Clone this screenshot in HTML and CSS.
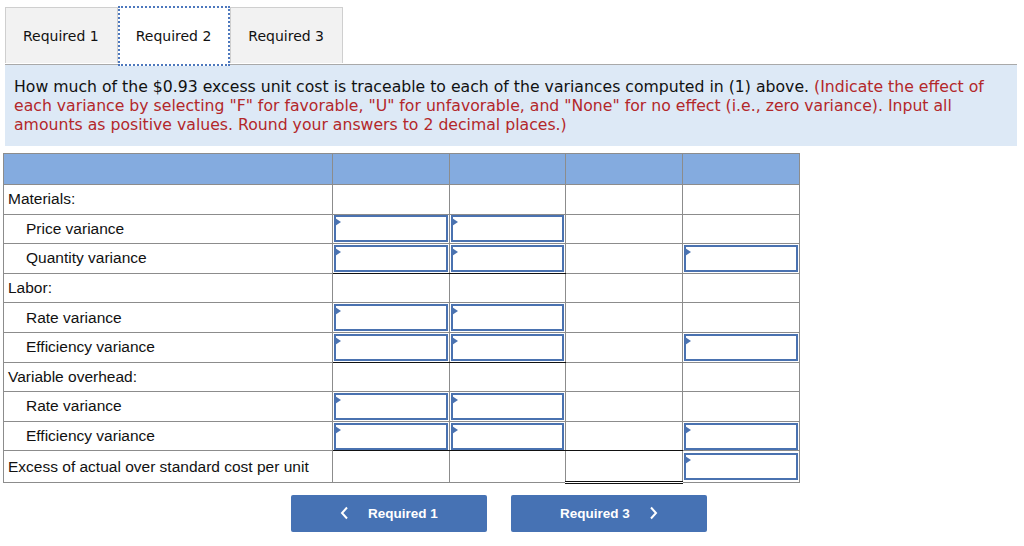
FILE: index.html
```html
<!DOCTYPE html>
<html>
<head>
<meta charset="utf-8">
<link rel="stylesheet" href="styles.css">
</head>
<body>
<div class="tabs">
  <div class="tab">Required 1</div>
  <div class="tab active">Required 2</div>
  <div class="tab">Required 3</div>
</div>
<div class="instructions">
  <p>How much of the $0.93 excess unit cost is traceable to each of the variances computed in (1) above. <span class="red">(Indicate the effect of each variance by selecting "F" for favorable, "U" for unfavorable, and "None" for no effect (i.e., zero variance). Input all amounts as positive values. Round your answers to 2 decimal places.)</span></p>
</div>
<table class="grid">
  <tr class="head"><th class="label"></th><th></th><th></th><th></th><th></th></tr>
  <tr><td class="label">Materials:</td><td></td><td></td><td></td><td></td></tr>
  <tr><td class="label sub">Price variance</td><td><div class="inp"></div></td><td><div class="inp"></div></td><td></td><td></td></tr>
  <tr><td class="label sub">Quantity variance</td><td class="tot"><div class="inp"></div></td><td class="tot"><div class="inp"></div></td><td></td><td><div class="inp"></div></td></tr>
  <tr><td class="label">Labor:</td><td></td><td></td><td></td><td></td></tr>
  <tr><td class="label sub">Rate variance</td><td><div class="inp"></div></td><td><div class="inp"></div></td><td></td><td></td></tr>
  <tr><td class="label sub">Efficiency variance</td><td class="tot"><div class="inp"></div></td><td class="tot"><div class="inp"></div></td><td></td><td><div class="inp"></div></td></tr>
  <tr><td class="label">Variable overhead:</td><td></td><td></td><td></td><td></td></tr>
  <tr><td class="label sub">Rate variance</td><td><div class="inp"></div></td><td><div class="inp"></div></td><td></td><td></td></tr>
  <tr><td class="label sub">Efficiency variance</td><td class="tot"><div class="inp"></div></td><td class="tot"><div class="inp"></div></td><td class="tot"></td><td><div class="inp"></div></td></tr>
  <tr class="last"><td class="label">Excess of actual over standard cost per unit</td><td></td><td></td><td class="dbl"></td><td><div class="inp"></div></td></tr>
</table>
<div class="nav">
  <button class="navbtn"><svg class="chev" width="9" height="14" viewBox="0 0 9 14"><polyline points="7,1.5 2,7 7,12.5" fill="none" stroke="#fff" stroke-width="2"/></svg><span>Required 1</span></button>
  <button class="navbtn"><span>Required 3</span><svg class="chev" width="9" height="14" viewBox="0 0 9 14"><polyline points="2,1.5 7,7 2,12.5" fill="none" stroke="#fff" stroke-width="2"/></svg></button>
</div>
</body>
</html>
```
FILE: styles.css
```css
html, body {
  margin: 0;
  padding: 0;
  background: #fff;
}
body {
  font-family: "DejaVu Sans", Verdana, sans-serif;
  color: #111;
}
.tabs {
  display: flex;
  margin-left: 5px;
  width: 1012px;
  padding-top: 7px;
  border-bottom: 1px solid #a9a9a9;
}
.tab {
  height: 55px;
  display: flex;
  align-items: center;
  padding: 0 18px 0 17px;
  font-size: 14px;
  background: #f2f2f2;
  border: 1px solid #cfcfcf;
  border-bottom: none;
  color: #111;
}
.tab.active {
  background: #fff;
  border: 2px dotted #4d78bd;
  border-bottom: 2px dotted #4d78bd;
  padding: 0 17px 0 16px;
  margin-top: -1px;
  margin-bottom: -2px;
  height: 56px;
}
.instructions {
  margin-left: 5px;
  width: 1012px;
  box-sizing: border-box;
  background: #dde9f6;
  padding: 12px 9px 12px 9px;
}
.instructions p {
  margin: 0;
  font-size: 15.7px;
  line-height: 19px;
  color: #111;
}
.red {
  color: #b3272a;
}
.grid {
  margin: 7px 0 0 3px;
  border-collapse: collapse;
  font-family: "Liberation Sans", Arial, sans-serif;
  font-size: 15.5px;
  border: 1px solid #8c8c8c;
}
.grid th, .grid td {
  border: 1px solid #8c8c8c;
  padding: 0;
  width: 116.7px;
  height: 29.6px;
  box-sizing: border-box;
}
.grid .head th {
  background: #84abdf;
  height: 31px;
}
.grid td.label, .grid th.label {
  width: 329px;
  padding-left: 4px;
  color: #111;
  text-align: left;
}
.grid td.sub {
  padding-left: 22px;
}
.grid tr.last td {
  height: 31.5px;
}
.grid td.tot {
  border-bottom: 1px solid #111;
}
.grid td.dbl {
  border-bottom: 3px double #111;
}
.inp {
  position: relative;
  height: 27px;
  margin: 0 1px;
  box-sizing: border-box;
  border: 2px solid #4a72b0;
  background: #fff;
}
.inp::before {
  content: "";
  position: absolute;
  left: -1px;
  top: 1px;
  border-top: 4px solid transparent;
  border-bottom: 4px solid transparent;
  border-left: 6px solid #4a72b0;
}
.nav {
  width: 998px;
  display: flex;
  justify-content: center;
  gap: 24px;
  margin-top: 11px;
}
.navbtn {
  width: 196px;
  height: 37px;
  border: none;
  border-radius: 2px;
  background: #4672b4;
  color: #fff;
  font-family: "Liberation Sans", Arial, sans-serif;
  font-weight: bold;
  font-size: 13.5px;
  display: flex;
  align-items: center;
  justify-content: center;
  gap: 19px;
  padding: 0;
}
.chev {
  display: block;
}
```
